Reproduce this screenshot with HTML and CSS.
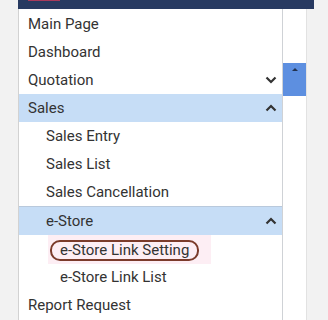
FILE: index.html
```html
<!DOCTYPE html>
<html lang="en">
<head>
	<meta charset="UTF-8">
	<title>Menu</title>
	<link rel="stylesheet" href="styles.css">
</head>
<body>
	<div id="wrapper">
		<div class="topbar"><span class="topbadge"></span></div>
		<div class="main">
			<ul class="menu">
				<li class="item">Main Page</li>
				<li class="item">Dashboard</li>
				<li class="item">Quotation
					<svg class="chev" width="12" height="8" viewBox="0 0 12 8"><path d="M1.5 1.5 L6 6 L10.5 1.5" fill="none" stroke="#333" stroke-width="2.2"/></svg>
				</li>
				<li class="item open">Sales
					<svg class="chev" width="12" height="8" viewBox="0 0 12 8"><path d="M1.5 6.5 L6 2 L10.5 6.5" fill="none" stroke="#333" stroke-width="2.2"/></svg>
				</li>
				<li class="item sub">Sales Entry</li>
				<li class="item sub">Sales List</li>
				<li class="item sub">Sales Cancellation</li>
				<li class="item sub open line">e-Store
					<svg class="chev" width="12" height="8" viewBox="0 0 12 8"><path d="M1.5 6.5 L6 2 L10.5 6.5" fill="none" stroke="#333" stroke-width="2.2"/></svg>
				</li>
				<li class="item subsub marked"><span class="mark"><span class="ring">e-Store Link Setting</span></span></li>
				<li class="item subsub">e-Store Link List</li>
				<li class="item">Report Request</li>
			</ul>
			<div class="scroll"><div class="thumb"><span class="arrow"></span></div></div>
		</div>
	</div>
</body>
</html>
```
FILE: styles.css
```css
body {
	margin: 0;
	background-color: #f2f2f2;
	font-family: Roboto, "Noto Sans", sans-serif;
	overflow: hidden;
}
#wrapper {
	padding-left: 18px;
	height: 320px;
}
.topbar {
	width: 296px;
	height: 9px;
	background-color: #283a61;
	display: flex;
	align-items: flex-start;
}
.topbadge {
	margin-left: 10px;
	width: 32px;
	height: 1px;
	background-color: #a83a5c;
}
.main {
	display: flex;
}
.menu {
	list-style: none;
	margin: 0;
	padding: 1px 0 0 0;
	width: 263px;
	background-color: #fff;
	border-left: 1px solid #d2d2d2;
	border-right: 1px solid #cfd2d6;
	height: 310px;
}
.item {
	height: 28px;
	display: flex;
	align-items: center;
	justify-content: space-between;
	padding: 0 5px 0 9px;
	font-size: 15px;
	color: #333;
}
.item.open {
	background-color: #c6ddf6;
}
.item.line {
	border-top: 1px solid #b9c9dc;
}
.sub {
	padding-left: 27px;
}
.subsub {
	padding-left: 41px;
}
.subsub.marked {
	padding-left: 29px;
}
.mark {
	background-color: #fdeef4;
	padding: 5px 12px 3px 2px;
}
.ring {
	display: inline-block;
	border: 2px solid #7b3b2b;
	border-radius: 10px;
	padding: 0 8px 0 8px;
	line-height: 17px;
}
.scroll {
	width: 23px;
	background-color: #fff;
	border-right: 1px solid #e2e2e2;
	height: 311px;
}
.thumb {
	margin-top: 54px;
	height: 33px;
	background-color: #5d8fe0;
	display: flex;
	justify-content: center;
}
.arrow {
	margin-top: 5px;
	width: 0;
	height: 0;
	border-left: 3px solid transparent;
	border-right: 3px solid transparent;
	border-bottom: 3px solid #23324f;
}
```
